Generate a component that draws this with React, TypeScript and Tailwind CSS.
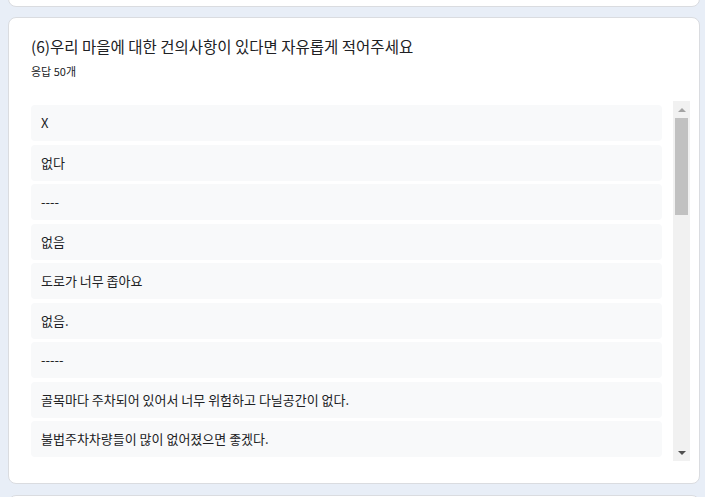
import React from 'react';

const answers: string[] = [
  'X',
  '없다',
  '----',
  '없음',
  '도로가 너무 좁아요',
  '없음.',
  '-----',
  '골목마다 주차되어 있어서 너무 위험하고 다닐공간이 없다.',
  '불법주차차량들이 많이 없어졌으면 좋겠다.',
];

const font = { fontFamily: '"Noto Sans CJK KR", "Noto Sans", sans-serif' };

const Scrollbar: React.FC = () => (
  <div className="w-[17px] shrink-0 bg-[#f1f1f1] flex flex-col items-center">
    <div className="h-[17px] w-full flex items-center justify-center">
      <div className="w-0 h-0 border-l-[4px] border-r-[4px] border-b-[4px] border-l-transparent border-r-transparent border-b-[#a3a3a3]" />
    </div>
    <div className="w-[13px] h-[97px] bg-[#c1c1c1]" />
    <div className="flex-1" />
    <div className="h-[17px] w-full flex items-center justify-center">
      <div className="w-0 h-0 border-l-[4px] border-r-[4px] border-t-[4px] border-l-transparent border-r-transparent border-t-[#505050]" />
    </div>
  </div>
);

export default function App() {
  return (
    <div className="w-[705px] h-[497px] overflow-hidden bg-[#e8eef7] flex flex-col pl-[8px] pr-[5px]" style={font}>
      <div className="h-[5px] -mt-[10px] pt-[10px] box-content bg-white border border-[#dadce0] rounded-b-[8px] shrink-0" />
      <div className="mt-[10px] bg-white border border-[#dadce0] rounded-[8px] flex flex-col pl-[22px] pr-[9px] pt-[17px] pb-[22px] shrink-0">
        <div className="text-[15.5px] leading-[22px] text-[#202124]">
          (6)우리 마을에 대한 건의사항이 있다면 자유롭게 적어주세요
        </div>
        <div className="mt-[6px] text-[11px] leading-[16px] text-[#202124]">응답 50개</div>
        <div className="mt-[22px] h-[360px] flex">
          <div className="flex-1 overflow-hidden pt-[4px] pr-[11px] flex flex-col gap-[3.5px]">
            {answers.map((a, i) => (
              <div
                key={i}
                className="h-[36px] shrink-0 bg-[#f8f9fa] rounded-[4px] px-[10px] flex items-center text-[13px] text-[#202124]"
              >
                {a}
              </div>
            ))}
          </div>
          <Scrollbar />
        </div>
      </div>
      <div className="mt-[11px] h-[20px] bg-white border border-[#dadce0] rounded-t-[8px] shrink-0" />
    </div>
  );
}
